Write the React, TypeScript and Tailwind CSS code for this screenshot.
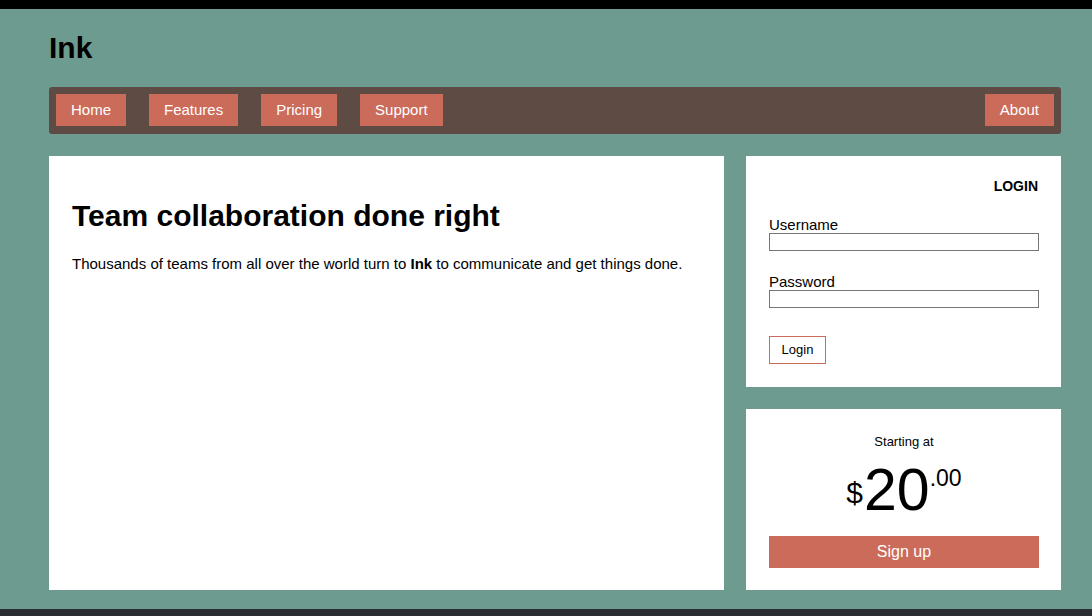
import React from "react";

const navLeft = ["Home", "Features", "Pricing", "Support"];

const NavButton = ({ label }: { label: string }) => (
  <a className="flex h-[32px] items-center bg-[#cb6b5a] px-[15px] text-[15px] text-white">{label}</a>
);

const App = () => {
  return (
    <div
      className="flex h-[616px] w-full flex-col overflow-hidden bg-[#6e9b8f] text-black"
      style={{ fontFamily: '"Liberation Sans", Arial, sans-serif' }}
    >
      <div className="h-[9px] shrink-0 bg-black" />

      <div className="ml-[49px] w-[1012px] shrink-0">
        <header className="flex h-[78px] items-center">
          <h1 className="text-[30px] font-bold leading-none">Ink</h1>
        </header>

        <nav className="flex h-[47px] items-start justify-between rounded-[3px] bg-[#5e4b44] px-[7px] pt-[7px]">
          <div className="flex gap-[23px]">
            {navLeft.map((l) => (
              <NavButton key={l} label={l} />
            ))}
          </div>
          <NavButton label="About" />
        </nav>

        <div className="mt-[22px] flex h-[434px] gap-[22px]">
          <main className="w-[675px] bg-white px-[23px] pt-[44px]">
            <h2 className="text-[30px] font-bold leading-[32px]">Team collaboration done right</h2>
            <p className="mt-[23px] text-[15px] leading-[17px]">
              Thousands of teams from all over the world turn to <b>Ink</b> to communicate and get things done.
            </p>
          </main>

          <aside className="flex w-[315px] flex-col gap-[22px]">
            <div className="h-[231px] bg-white pl-[23px] pr-[22px] pt-[22px]">
              <div className="pr-[1px] text-right text-[14px] font-bold leading-[16px]">LOGIN</div>
              <label className="mt-[22px] block text-[15px] leading-[17px]">Username</label>
              <input className="block h-[18px] w-full border border-[#767676]" type="text" />
              <label className="mt-[22px] block text-[15px] leading-[17px]">Password</label>
              <input className="block h-[18px] w-full border border-[#767676]" type="password" />
              <button className="mt-[28px] h-[28px] w-[57px] border border-[#cb6b5a] text-[13px]">Login</button>
            </div>

            <div className="flex flex-1 flex-col items-center bg-white pl-[23px] pr-[22px] pt-[25px]">
              <div className="text-[13px] leading-[15px]">Starting at</div>
              <div className="mt-[12px] flex items-start leading-none">
                <span className="mr-[1px] mt-[17px] text-[30px]">$</span>
                <span className="text-[59px]">20</span>
                <span className="mt-[6px] text-[23px]">.00</span>
              </div>
              <button className="mt-[16px] h-[32px] w-full bg-[#cb6b5a] text-[16px] text-white">Sign up</button>
            </div>
          </aside>
        </div>
      </div>

      <div className="mt-[19px] flex-1 bg-[#2b2d35]" />
    </div>
  );
};

export default App;
